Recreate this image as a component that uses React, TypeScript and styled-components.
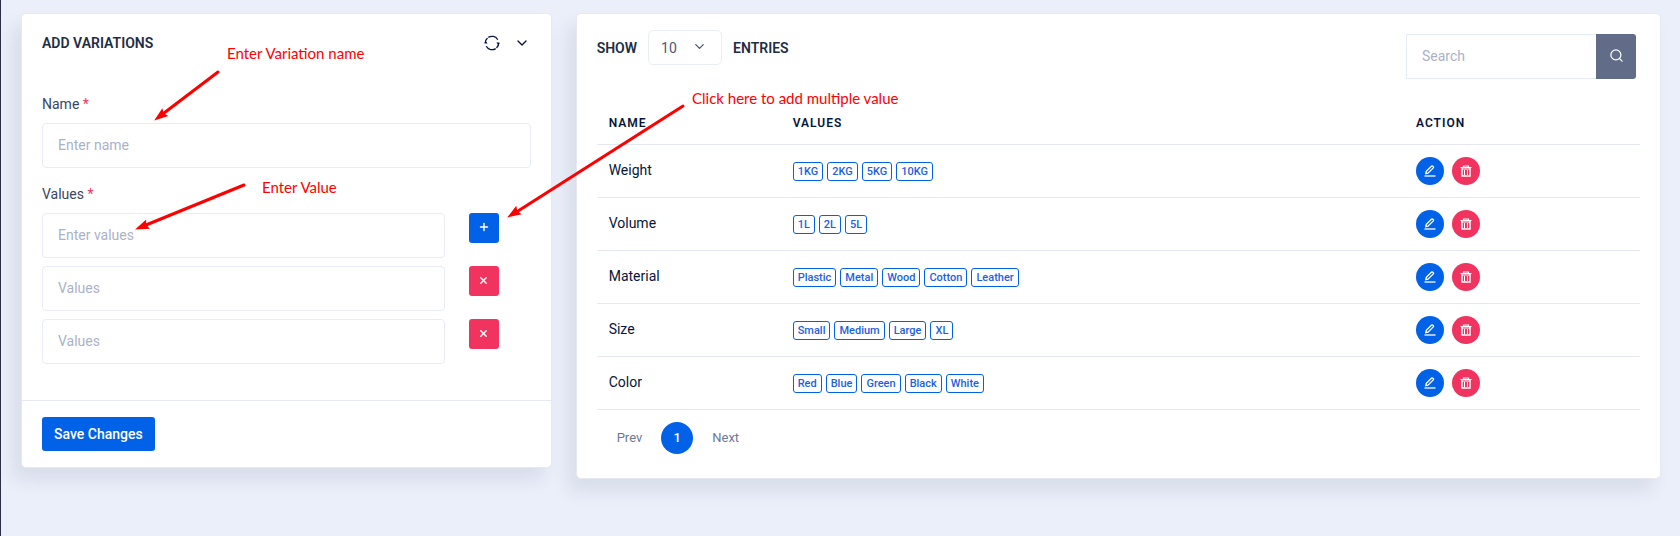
import React from 'react';
import styled, { createGlobalStyle } from 'styled-components';
import { ChevronDown, Plus, Search, X } from 'lucide-react';

const GlobalStyle = createGlobalStyle`
  *, *::before, *::after { box-sizing: border-box; }
  body {
    margin: 0;
    background: #ebeffa;
    color: #06163a;
    font-family: Roboto, "Liberation Sans", sans-serif;
    font-size: 14px;
    line-height: 20px;
  }
  button, input, select { font: inherit; color: inherit; margin: 0; }
  button { cursor: pointer; }
`;

const Page = styled.div`
  position: relative;
  min-height: 100vh;
  padding: 13px 19px 24px 20px;
  border-left: 1px solid #2b3044;
`;

const Columns = styled.main`
  display: grid;
  grid-template-columns: repeat(12, minmax(0, 1fr));
  gap: 24px;
  align-items: start;
`;

const Card = styled.section<{ $span: number }>`
  grid-column: span ${(p) => p.$span};
  background: #fff;
  border: 1px solid #e6e9f2;
  border-radius: 5px;
  box-shadow: -8px 12px 18px 0 rgba(25, 42, 70, 0.09);
`;

const CardHeader = styled.header`
  display: flex;
  align-items: center;
  justify-content: space-between;
  padding: 19px 20px;
`;

const Title = styled.h2`
  margin: 0;
  color: #1f2d44;
  font-size: 14px;
  font-weight: 600;
  text-transform: uppercase;
`;

const HeaderActions = styled.div`
  display: flex;
  gap: 14px;
  margin-right: 1px;
`;

const IconButton = styled.button`
  display: flex;
  align-items: center;
  padding: 0;
  border: 0;
  background: none;
`;

const FormBody = styled.div`
  padding: 22px 20px 36px;
`;

const Field = styled.div`
  margin-bottom: 16px;
`;

const Label = styled.label`
  display: block;
  margin-bottom: 9px;
  color: #3a4560;
`;

const Required = styled.span`
  color: #f1335f;
`;

const TextInput = styled.input`
  display: block;
  width: 100%;
  height: 45px;
  padding: 0 15px 2px;
  border: 1px solid #e9ecf6;
  border-radius: 4px;
  background: #fff;
  outline: 0;
  &::placeholder { color: #abb2c6; opacity: 1; }
`;

const ValueList = styled.div`
  display: grid;
  gap: 8px;
`;

const ValueRow = styled.div`
  display: grid;
  grid-template-columns: minmax(0, 1fr) 62px;
  column-gap: 24px;
`;

const SquareButton = styled.button<{ $danger?: boolean }>`
  display: flex;
  align-items: center;
  justify-content: center;
  width: 30px;
  height: 30px;
  padding: 0 0 2px;
  border: 0;
  border-radius: 3px;
  color: #fff;
  background: ${(p) => (p.$danger ? '#f1335f' : '#0162e8')};
`;

const CardFooter = styled.footer`
  padding: 16px 20px;
  border-top: 1px solid #e6e9f2;
`;

const SaveButton = styled.button`
  height: 34px;
  padding: 0 12px;
  border: 0;
  border-radius: 3px;
  background: #0162e8;
  color: #fff;
  font-weight: 500;
`;

const ListBody = styled.div`
  padding: 16px 20px 24px;
`;

const Toolbar = styled.div`
  display: flex;
  justify-content: space-between;
  align-items: flex-start;
  padding-right: 4px;
`;

const ShowEntries = styled.label`
  display: flex;
  align-items: center;
  gap: 11px;
  color: #1f2d44;
  font-weight: 600;
  text-transform: uppercase;
`;

const SelectWrap = styled.span`
  position: relative;
  display: block;
  color: #4d5770;
  font-weight: 400;
  svg {
    position: absolute;
    right: 15px;
    top: 9px;
    pointer-events: none;
  }
`;

const Select = styled.select`
  display: block;
  width: 74px;
  height: 35px;
  padding: 0 12px;
  border: 1px solid #e9eef6;
  border-radius: 5px;
  background: #fff;
  appearance: none;
  outline: 0;
`;

const SearchGroup = styled.form`
  display: flex;
  width: 230px;
  margin-top: 4px;
`;

const SearchInput = styled(TextInput)`
  flex: 1;
  min-width: 0;
  border-color: #e6ecf5;
  border-right: 0;
  border-radius: 0;
`;

const SearchButton = styled.button`
  display: flex;
  align-items: center;
  justify-content: center;
  width: 40px;
  padding: 0 0 2px;
  border: 0;
  border-radius: 0 3px 3px 0;
  background: #606c88;
  color: #fff;
`;

const Table = styled.table`
  width: 100%;
  margin-top: 21px;
  border-collapse: collapse;
  table-layout: fixed;
  td, th {
    padding: 0 12px;
    border-bottom: 1px solid #e6e8f1;
    text-align: left;
  }
  th {
    height: 44px;
    padding-top: 2px;
    font-size: 12px;
    font-weight: 600;
    letter-spacing: 1px;
    text-transform: uppercase;
  }
  td { height: 53px; }
  td:nth-child(1) { padding-bottom: 2px; }
  td:nth-child(2) { padding-top: 2px; }
`;

const HeadCell = styled.th<{ $width?: number }>`
  width: ${(p) => (p.$width ? `${p.$width}px` : 'auto')};
`;

const Inline = styled.div<{ $gap: number }>`
  display: flex;
  align-items: center;
  gap: ${(p) => p.$gap}px;
`;

const Badge = styled.span`
  padding: 0 4px;
  border: 1px solid #0162e8;
  border-radius: 3px;
  color: #1d5fe0;
  font-size: 11px;
  font-weight: 500;
  line-height: 17px;
`;

const RoundButton = styled.button<{ $danger?: boolean }>`
  display: flex;
  align-items: center;
  justify-content: center;
  width: 28px;
  height: 28px;
  padding: 0;
  border: 0;
  border-radius: 50%;
  color: #fff;
  background: ${(p) => (p.$danger ? '#f1335f' : '#0162e8')};
`;

const Pagination = styled.nav`
  display: flex;
  align-items: center;
  gap: 19px;
  padding: 12px 20px 0;
  font-size: 13px;
`;

const PageLink = styled.a<{ $active?: boolean }>`
  color: ${(p) => (p.$active ? '#fff' : '#6c7898')};
  text-decoration: none;
  ${(p) =>
    p.$active &&
    `width: 32px; border-radius: 50%; background: #0162e8; line-height: 32px; text-align: center; font-weight: 500;`}
`;

const Arrows = styled.svg`
  position: absolute;
  top: 0;
  left: -1px;
  pointer-events: none;
`;

const Note = styled.span<{ $x: number; $y: number }>`
  position: absolute;
  left: ${(p) => p.$x}px;
  top: ${(p) => p.$y}px;
  color: #ff0000;
  font-family: Lato, "Noto Sans", sans-serif;
  font-size: 15px;
  white-space: nowrap;
  pointer-events: none;
`;

const SyncIcon = () => (
  <svg width="16" height="16" viewBox="0 0 16 16" fill="none" stroke="currentColor" strokeWidth="1.300" aria-hidden="true">
    <path d="M1.300 8A6.700 6.700 0 0 1 3.500 3M4.300 2.400A6.700 6.700 0 0 1 13.800 4.700" />
    <path d="M14.700 8A6.700 6.700 0 0 1 12.500 13M11.700 13.600A6.700 6.700 0 0 1 2.200 11.300" />
    <path d="M1.400 5.200L3.600 8.400H.4ZM14.600 10.800L12.400 7.600H15.600Z" fill="currentColor" stroke="none" />
  </svg>
);

const EditIcon = () => (
  <svg width="12" height="12" viewBox="0 0 12 12" fill="none" stroke="currentColor" aria-hidden="true">
    <path d="M1.800 8.600L2.300 6.400L7.600 1.100Q8.300 .7 8.900 1.300L9.300 1.700Q9.800 2.300 9.300 2.900L4 8.200Z" strokeWidth="1.300" />
    <path d="M.5 11H11.500" strokeWidth="1.300" />
  </svg>
);

const TrashIcon = () => (
  <svg width="12" height="12" viewBox="0 0 12 12" fill="none" stroke="currentColor" aria-hidden="true">
    <path d="M.5 2.500h11M3.500 2.500v-1.500h5v1.500" strokeWidth="1.200" />
    <path d="M2 3v8h8V3" strokeWidth="1.500" />
    <path d="M2 4h8M4.500 5v5M7.500 5v5" strokeWidth="1" />
  </svg>
);

const rows = [
  { name: 'Weight', values: ['1KG', '2KG', '5KG', '10KG'] },
  { name: 'Volume', values: ['1L', '2L', '5L'] },
  { name: 'Material', values: ['Plastic', 'Metal', 'Wood', 'Cotton', 'Leather'] },
  { name: 'Size', values: ['Small', 'Medium', 'Large', 'XL'] },
  { name: 'Color', values: ['Red', 'Blue', 'Green', 'Black', 'White'] },
];

export default function App() {
  return (
    <>
      <GlobalStyle />
      <Page>
        <Columns>
          <Card $span={4}>
            <CardHeader>
              <Title>Add Variations</Title>
              <HeaderActions>
                <IconButton type="button" aria-label="Refresh"><SyncIcon /></IconButton>
                <IconButton type="button" aria-label="Collapse"><ChevronDown size={16} /></IconButton>
              </HeaderActions>
            </CardHeader>
            <FormBody>
              <Field>
                <Label htmlFor="name">Name <Required>*</Required></Label>
                <TextInput id="name" placeholder="Enter name" />
              </Field>
              <Label htmlFor="value-0">Values <Required>*</Required></Label>
              <ValueList>
                <ValueRow>
                  <TextInput id="value-0" placeholder="Enter values" />
                  <SquareButton type="button" aria-label="Add value"><Plus size={12} strokeWidth={3} /></SquareButton>
                </ValueRow>
                {[1, 2].map((n) => (
                  <ValueRow key={n}>
                    <TextInput aria-label={`Value ${n + 1}`} placeholder="Values" />
                    <SquareButton $danger type="button" aria-label="Remove value"><X size={11} strokeWidth={3} /></SquareButton>
                  </ValueRow>
                ))}
              </ValueList>
            </FormBody>
            <CardFooter>
              <SaveButton type="button">Save Changes</SaveButton>
            </CardFooter>
          </Card>

          <Card $span={8}>
            <ListBody>
              <Toolbar>
                <ShowEntries>
                  Show
                  <SelectWrap>
                    <Select defaultValue="10" aria-label="Entries per page">
                      <option>10</option>
                      <option>25</option>
                      <option>50</option>
                    </Select>
                    <ChevronDown size={15} />
                  </SelectWrap>
                  Entries
                </ShowEntries>
                <SearchGroup role="search">
                  <SearchInput aria-label="Search" placeholder="Search" />
                  <SearchButton type="button" aria-label="Search"><Search size={15} /></SearchButton>
                </SearchGroup>
              </Toolbar>
              <Table>
                <thead>
                  <tr>
                    <HeadCell $width={184}>Name</HeadCell>
                    <HeadCell>Values</HeadCell>
                    <HeadCell $width={236}>Action</HeadCell>
                  </tr>
                </thead>
                <tbody>
                  {rows.map((row) => (
                    <tr key={row.name}>
                      <td>{row.name}</td>
                      <td>
                        <Inline $gap={4}>
                          {row.values.map((v) => <Badge key={v}>{v}</Badge>)}
                        </Inline>
                      </td>
                      <td>
                        <Inline $gap={8}>
                          <RoundButton type="button" aria-label={`Edit ${row.name}`}><EditIcon /></RoundButton>
                          <RoundButton $danger type="button" aria-label={`Delete ${row.name}`}><TrashIcon /></RoundButton>
                        </Inline>
                      </td>
                    </tr>
                  ))}
                </tbody>
              </Table>
              <Pagination aria-label="Pages">
                <PageLink href="#prev">Prev</PageLink>
                <PageLink href="#1" $active aria-current="page">1</PageLink>
                <PageLink href="#next">Next</PageLink>
              </Pagination>
            </ListBody>
          </Card>
        </Columns>

        <Arrows width="720" height="260" stroke="#f00" fill="#f00" strokeWidth="3" strokeLinecap="round" aria-hidden="true">
          <defs>
            <marker id="head" markerUnits="userSpaceOnUse" markerWidth="14" markerHeight="12" refX="13" refY="6" orient="auto">
              <path d="M0 1L14 6L0 11L2 6Z" stroke="none" />
            </marker>
          </defs>
          <path d="M218 72L164 113" />
          <path d="M218 72L155 120" stroke="none" fill="none" markerEnd="url(#head)" />
          <path d="M244 185L146 225" />
          <path d="M244 185L136 229" stroke="none" fill="none" markerEnd="url(#head)" />
          <path d="M683 106L518 211" />
          <path d="M683 106L508 217" stroke="none" fill="none" markerEnd="url(#head)" />
        </Arrows>
        <Note $x={226} $y={43}>Enter Variation name</Note>
        <Note $x={261} $y={177}>Enter Value</Note>
        <Note $x={691} $y={88}>Click here to add multiple value</Note>
      </Page>
    </>
  );
}
